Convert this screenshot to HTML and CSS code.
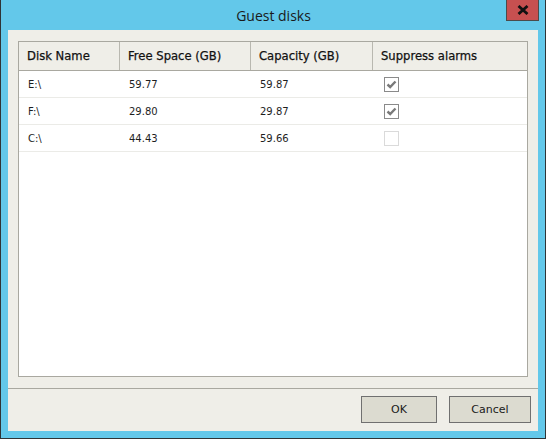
FILE: index.html
```html
<!DOCTYPE html>
<html>
<head>
<meta charset="utf-8">
<link rel="stylesheet" href="styles.css">
</head>
<body>
<div class="window">
  <div class="titlebar">
    <div class="title">Guest disks</div>
    <div class="close"><svg width="12" height="10" viewBox="0 0 12 10"><path d="M1.5 1 L10.5 9 M10.5 1 L1.5 9" stroke="#111" stroke-width="2.8" fill="none"/></svg></div>
  </div>
  <div class="content">
    <div class="grid-wrap">
      <div class="table">
        <div class="row head">
          <div class="cell">Disk Name</div>
          <div class="cell">Free Space (GB)</div>
          <div class="cell">Capacity (GB)</div>
          <div class="cell last">Suppress alarms</div>
        </div>
        <div class="row">
          <div class="cell">E:\</div>
          <div class="cell">59.77</div>
          <div class="cell">59.87</div>
          <div class="cell last"><span class="cb checked"><svg width="11" height="9" viewBox="0 0 11 9"><path d="M1.5 4.5 L4.2 7 L9.5 1.5" stroke="#7a7a7a" stroke-width="2.4" fill="none"/></svg></span></div>
        </div>
        <div class="row">
          <div class="cell">F:\</div>
          <div class="cell">29.80</div>
          <div class="cell">29.87</div>
          <div class="cell last"><span class="cb checked"><svg width="11" height="9" viewBox="0 0 11 9"><path d="M1.5 4.5 L4.2 7 L9.5 1.5" stroke="#7a7a7a" stroke-width="2.4" fill="none"/></svg></span></div>
        </div>
        <div class="row">
          <div class="cell">C:\</div>
          <div class="cell">44.43</div>
          <div class="cell">59.66</div>
          <div class="cell last"><span class="cb empty"></span></div>
        </div>
      </div>
    </div>
    <div class="footer">
      <button class="btn ok">OK</button>
      <button class="btn cancel">Cancel</button>
    </div>
  </div>
</div>
</body>
</html>
```
FILE: styles.css
```css
html, body {
  margin: 0;
  padding: 0;
  background: #2f2f2f;
}
.window {
  width: 546px;
  height: 439px;
  box-sizing: border-box;
  background: #63c8ea;
  border: 1px solid #2f3436;
  border-top: none;
  display: flex;
  flex-direction: column;
}
.titlebar {
  height: 30px;
  flex: none;
  position: relative;
  display: flex;
  align-items: center;
  justify-content: center;
}
.title {
  font-family: "Open Sans", "Noto Sans", sans-serif;
  font-size: 14px;
  color: #1a1a1a;
  margin-left: 1px;
  margin-top: 1px;
}
.close {
  position: absolute;
  top: 0;
  left: 505px;
  width: 33px;
  height: 21px;
  box-sizing: border-box;
  background: #c75050;
  border: 1px solid #4b4b4b;
  border-top: none;
  display: flex;
  align-items: center;
  justify-content: center;
}
.content {
  flex: 1;
  margin: 0 7px 7px 7px;
  background: #efeee8;
  display: flex;
  flex-direction: column;
}
.grid-wrap {
  padding: 11px 10px 0 10px;
}
.table {
  height: 336px;
  box-sizing: border-box;
  border: 1px solid #a9a8a0;
  background: #ffffff;
  font-family: "DejaVu Sans", Verdana, sans-serif;
  color: #1e1e1e;
}
.row {
  display: grid;
  grid-template-columns: 101px 131px 122px 1fr;
  height: 27px;
  box-sizing: border-box;
  border-bottom: 1px solid #ebebe7;
  font-size: 10px;
}
.row.head {
  height: 29px;
  background: #efeee8;
  border-bottom: 1px solid #a9a8a0;
  font-size: 11.6px;
  color: #111;
  -webkit-text-stroke: 0.25px #111;
}
.cell {
  display: flex;
  align-items: center;
  padding-left: 9px;
  white-space: nowrap;
}
.head .cell {
  border-right: 1px solid #b9b8b0;
  padding-left: 8px;
}
.head .cell.last {
  border-right: none;
}
.cb {
  width: 15px;
  height: 15px;
  box-sizing: border-box;
  margin-left: 2px;
  background: #fff;
  display: flex;
  align-items: center;
  justify-content: center;
}
.cb.checked {
  border: 1px solid #8a8a8a;
}
.cb.empty {
  border: 1px solid #dadada;
}
.footer {
  margin-top: 11px;
  border-top: 1px solid #a9a8a0;
  padding: 7px 7px 0 0;
  display: flex;
  justify-content: flex-end;
  gap: 12px;
}
.btn {
  height: 27px;
  box-sizing: border-box;
  border: 1px solid #707070;
  background: #dcdbd0;
  font-family: "DejaVu Sans", Verdana, sans-serif;
  font-size: 11px;
  color: #1a1a1a;
  padding: 0;
  margin: 0;
}
.btn.ok {
  width: 76px;
}
.btn.cancel {
  width: 82px;
}
```
